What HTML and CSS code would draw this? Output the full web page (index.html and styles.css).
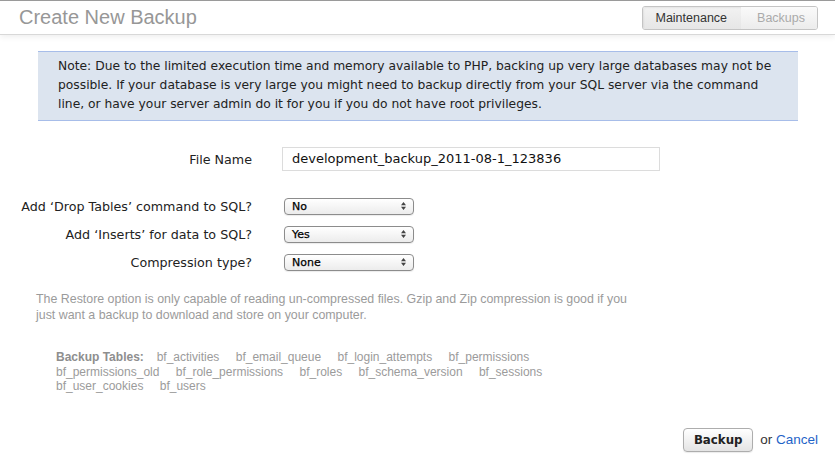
FILE: index.html
```html
<!DOCTYPE html>
<html>
<head>
<meta charset="utf-8">
<link rel="stylesheet" href="styles.css">
</head>
<body>
<header class="header">
  <h1 class="title">Create New Backup</h1>
  <nav class="tabs">
    <span class="tab active">Maintenance</span>
    <span class="tab">Backups</span>
  </nav>
</header>
<main class="main">
  <div class="note">Note: Due to the limited execution time and memory available to PHP, backing up very large databases may not be possible. If your database is very large you might need to backup directly from your SQL server via the command line, or have your server admin do it for you if you do not have root privileges.</div>

  <div class="row row-file">
    <label class="label">File Name</label>
    <div class="input">development_backup_2011-08-1_123836</div>
  </div>

  <div class="selects">
    <div class="row row-select">
      <label class="label">Add ‘Drop Tables’ command to SQL?</label>
      <div class="select"><span>No</span><svg class="arrows" width="5" height="8" viewBox="0 0 5 8"><path d="M0 3.2 L2.5 0 L5 3.2 Z M0 4.8 L2.5 8 L5 4.8 Z" fill="#444"/></svg></div>
    </div>
    <div class="row row-select">
      <label class="label">Add ‘Inserts’ for data to SQL?</label>
      <div class="select"><span>Yes</span><svg class="arrows" width="5" height="8" viewBox="0 0 5 8"><path d="M0 3.2 L2.5 0 L5 3.2 Z M0 4.8 L2.5 8 L5 4.8 Z" fill="#444"/></svg></div>
    </div>
    <div class="row row-select">
      <label class="label">Compression type?</label>
      <div class="select"><span>None</span><svg class="arrows" width="5" height="8" viewBox="0 0 5 8"><path d="M0 3.2 L2.5 0 L5 3.2 Z M0 4.8 L2.5 8 L5 4.8 Z" fill="#444"/></svg></div>
    </div>
  </div>

  <p class="help">The Restore option is only capable of reading un-compressed files. Gzip and Zip compression is good if you just want a backup to download and store on your computer.</p>

  <p class="tables"><b class="tables-title">Backup Tables:</b> <span class="tbl">bf_activities</span> <span class="tbl">bf_email_queue</span> <span class="tbl">bf_login_attempts</span> <span class="tbl">bf_permissions</span> <span class="tbl">bf_permissions_old</span> <span class="tbl">bf_role_permissions</span> <span class="tbl">bf_roles</span> <span class="tbl">bf_schema_version</span> <span class="tbl">bf_sessions</span> <span class="tbl">bf_user_cookies</span> <span class="tbl">bf_users</span></p>

  <div class="actions">
    <button class="btn">Backup</button>
    <span class="or">or <a class="cancel" href="#">Cancel</a></span>
  </div>
</main>
</body>
</html>
```

FILE: styles.css
```css
html, body {
  margin: 0;
  padding: 0;
  background: #fff;
}
body {
  font-family: "DejaVu Sans", "Liberation Sans", sans-serif;
  color: #222;
  width: 835px;
  height: 458px;
  overflow: hidden;
}
.header {
  box-sizing: border-box;
  height: 35px;
  border-top: 1px solid #9a9a9a;
  border-bottom: 1px solid #d8d8d8;
  box-shadow: 0 2px 6px rgba(0,0,0,0.07);
  display: flex;
  align-items: center;
  justify-content: space-between;
  padding: 0 17px 0 19px;
}
.title {
  margin: 0;
  font-family: "Liberation Sans", Arial, sans-serif;
  font-weight: normal;
  font-size: 20px;
  color: #979797;
}
.tabs {
  display: flex;
  border: 1px solid #c4c4c4;
  border-radius: 3px;
  height: 24px;
  box-sizing: border-box;
  overflow: hidden;
}
.tab {
  font-family: "Liberation Sans", Arial, sans-serif;
  font-size: 12.5px;
  color: #aaa;
  padding: 0 12px 0 16px;
  display: flex;
  align-items: center;
  background: linear-gradient(#fafafa, #ececec);
}
.tab.active {
  color: #333;
  background: linear-gradient(#f2f2f2, #e6e6e6);
  padding: 0 14px 0 12px;
  box-shadow: inset 1px 1px 2px rgba(0,0,0,0.06);
}
.main {
  padding-top: 16px;
}
.note {
  margin: 0 37px 0 38px;
  background: #dce4ef;
  border-top: 1px solid #a7bde9;
  border-bottom: 1px solid #a7bde9;
  padding: 5px 18px 6px 20px;
  font-size: 12.3px;
  line-height: 19px;
  color: #222;
}
.row {
  display: flex;
  align-items: center;
}
.label {
  width: 252px;
  text-align: right;
  font-size: 12.7px;
  color: #222;
  flex: none;
}
.row-file {
  margin-top: 26px;
}
.input {
  margin-left: 30px;
  box-sizing: border-box;
  width: 378px;
  height: 24px;
  border: 1px solid #dcdcdc;
  padding: 0 9px;
  font-size: 13px;
  line-height: 22px;
  color: #111;
}
.selects {
  margin-top: 27px;
  display: flex;
  flex-direction: column;
  gap: 12px;
}
.row-select {
  height: 16px;
}
.select {
  margin-left: 32px;
  box-sizing: border-box;
  width: 130px;
  height: 17px;
  border: 1px solid #8c8c8c;
  border-radius: 4px;
  background: linear-gradient(#ffffff, #ececec);
  display: flex;
  align-items: center;
  justify-content: space-between;
  padding: 0 7px 0 7px;
  font-size: 11px;
  color: #000;
  -webkit-text-stroke: 0.25px #000;
  box-shadow: 0 1px 1px rgba(0,0,0,0.08);
}
.help {
  margin: 22px 0 0 36px;
  width: 592px;
  font-family: "Liberation Sans", Arial, sans-serif;
  font-size: 12.4px;
  line-height: 15.5px;
  color: #9b9b9b;
}
.tables {
  margin: 27px 0 0 56px;
  width: 500px;
  font-family: "Liberation Sans", Arial, sans-serif;
  font-size: 12px;
  line-height: 14.6px;
  color: #9b9b9b;
}
.tables-title {
  color: #8e8e8e;
  margin-right: 9.5px;
}
.tbl {
  margin-right: 13px;
}
.actions {
  margin-top: 34px;
  display: flex;
  justify-content: flex-end;
  align-items: center;
  padding-right: 17px;
}
.btn {
  width: 70px;
  height: 24px;
  border: 1px solid #adadad;
  border-radius: 4px;
  background: linear-gradient(#ffffff, #e4e4e4);
  font-family: "DejaVu Sans", sans-serif;
  font-weight: bold;
  font-size: 11.8px;
  color: #222;
  padding: 0;
  box-shadow: 0 1px 1px rgba(0,0,0,0.08);
}
.or {
  margin-left: 7px;
  font-family: "Liberation Sans", Arial, sans-serif;
  font-size: 13.5px;
  color: #333;
}
.cancel {
  color: #1f64c8;
  text-decoration: none;
}
```
